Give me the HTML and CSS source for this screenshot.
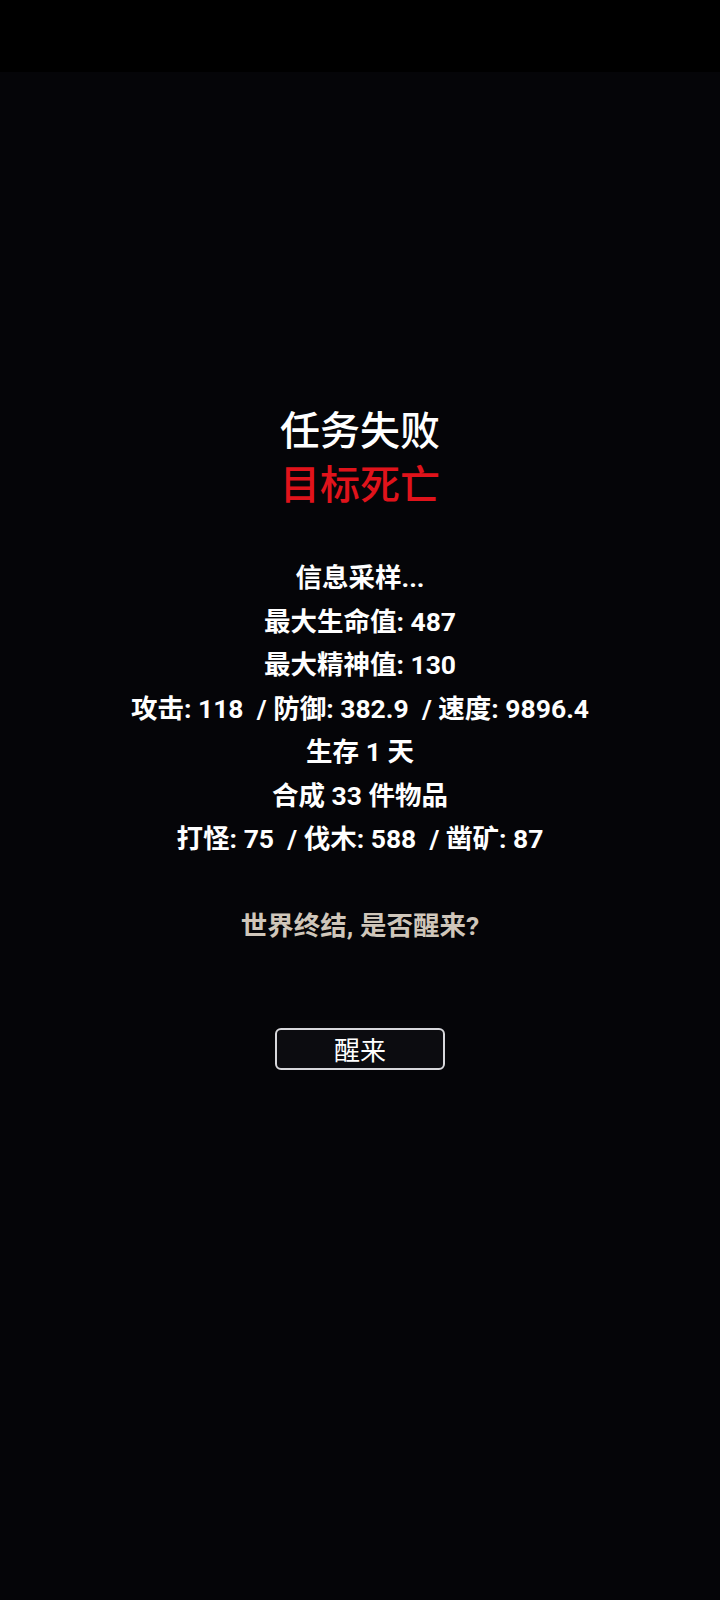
FILE: index.html
```html
<!DOCTYPE html>
<html lang="zh-CN">
<head>
    <meta charset="UTF-8">
    <meta name="viewport" content="width=device-width, initial-scale=1.0">
    <title>任务失败</title>
    <link rel="stylesheet" href="styles.css">
</head>
<body>

    <!-- Status bar area -->
    <div class="status-bar"></div>

    <div class="container">
        <!-- Result title -->
        <div class="result">
            <h1 class="title">任务失败</h1>
            <h2 class="reason">目标死亡</h2>
        </div>

        <!-- Run summary -->
        <div class="stats">
            <p>信息采样...</p>
            <p>最大生命值: 487</p>
            <p>最大精神值: 130</p>
            <p>攻击: 118 &nbsp;/ 防御: 382.9 &nbsp;/ 速度: 9896.4</p>
            <p>生存 1 天</p>
            <p>合成 33 件物品</p>
            <p>打怪: 75 &nbsp;/ 伐木: 588 &nbsp;/ 凿矿: 87</p>
        </div>

        <p class="prompt">世界终结, 是否醒来?</p>

        <button class="wake-button" id="wakeButton">醒来</button>
    </div>

</body>
</html>
```

FILE: styles.css
```css
body {
    font-family: Roboto, "Noto Sans CJK SC", sans-serif;
    background-color: #050508;
    color: #fff;
    margin: 0;
    min-height: 1600px;
}
.status-bar {
    height: 72px;
    background-color: #000;
}
.container {
    display: flex;
    flex-direction: column;
    align-items: center;
    text-align: center;
    padding-top: 329px;
}
.result h1,
.result h2 {
    margin: 0;
    font-size: 40px;
    font-weight: 500;
    line-height: 54px;
    font-family: "Noto Sans CJK SC", sans-serif;
}
.reason {
    color: #e0131b;
}
.stats {
    margin-top: 47px;
}
.stats p {
    margin: 0;
    font-size: 26.5px;
    font-weight: bold;
    line-height: 43.5px;
}
.prompt {
    margin: 43px 0 0;
    font-size: 26.5px;
    font-weight: bold;
    line-height: 43px;
    color: #cfc6ba;
}
.wake-button {
    margin-top: 81px;
    width: 170px;
    height: 42px;
    background-color: #0c0c10;
    color: #fff;
    border: 2px solid #d8d8dc;
    border-radius: 6px;
    font-family: "Noto Sans CJK SC", sans-serif;
    font-size: 26px;
    padding: 0;
    cursor: pointer;
}
```
